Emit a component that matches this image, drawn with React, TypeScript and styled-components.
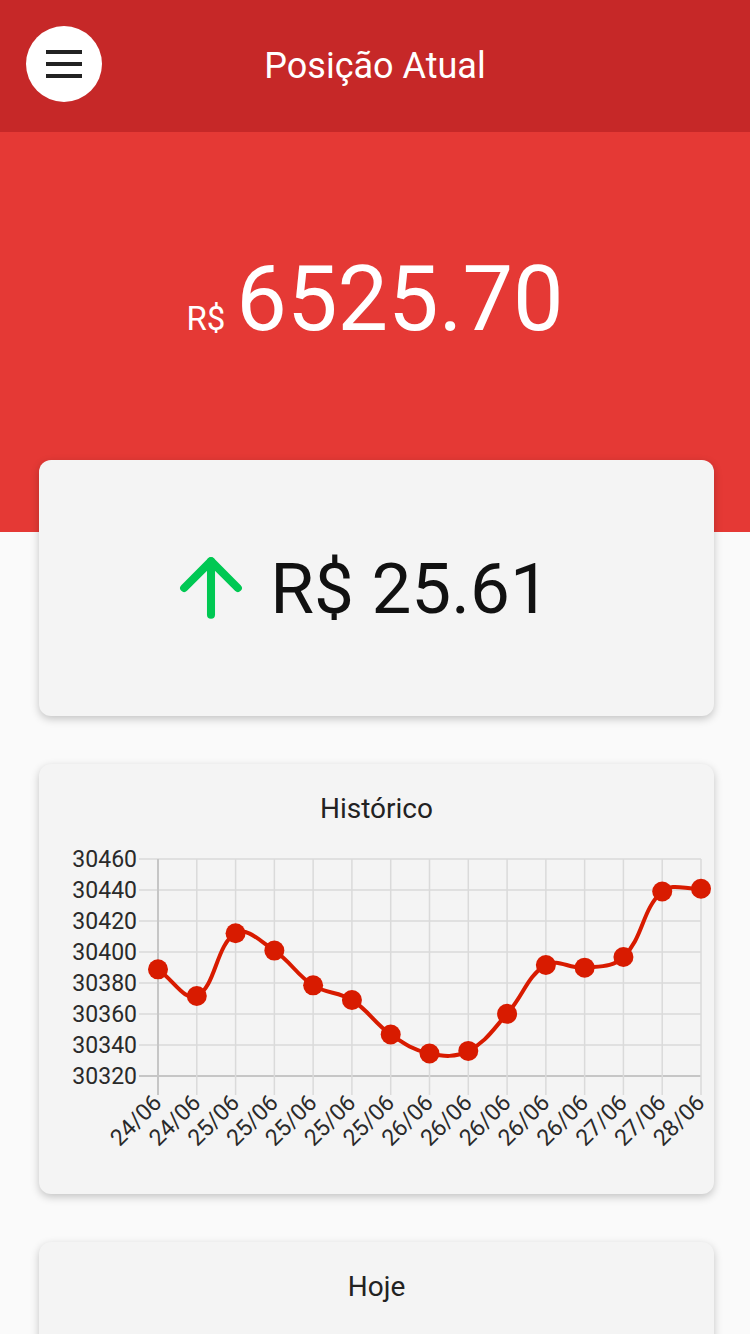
import { ReactElement } from 'react';
import styled, { createGlobalStyle } from 'styled-components';
import { ArrowUp } from 'lucide-react';

const GlobalStyle = createGlobalStyle`
  html, body {
    margin: 0;
    padding: 0;
    background: #fafafa;
    font-family: Roboto, "Liberation Sans", Arial, sans-serif;
  }
`;

const Page = styled.div`
  min-height: 1334px;
  background: #fafafa;
  overflow: hidden;
`;

const Header = styled.header`
  display: grid;
  grid-template-columns: 1fr auto 1fr;
  align-items: center;
  height: 132px;
  padding: 0 26px;
  box-sizing: border-box;
  background: #c62828;
`;

const MenuButton = styled.button`
  display: flex;
  flex-direction: column;
  align-items: center;
  justify-content: center;
  gap: 8px;
  align-self: start;
  margin-top: 26px;
  width: 76px;
  height: 76px;
  padding: 0;
  border: none;
  border-radius: 50%;
  background: #ffffff;
  cursor: pointer;
`;

const MenuLine = styled.span`
  display: block;
  width: 36px;
  height: 4px;
  background: #222222;
`;

const HeaderTitle = styled.h1`
  margin: 0;
  font-size: 36px;
  font-weight: 400;
  color: #ffffff;
  white-space: nowrap;
`;

const Hero = styled.section`
  display: flex;
  justify-content: center;
  align-items: baseline;
  height: 400px;
  padding-top: 123px;
  box-sizing: border-box;
  background: #e53935;
  color: #ffffff;
`;

const Currency = styled.span`
  font-size: 33px;
  margin-right: 11px;
`;

const Balance = styled.span`
  font-size: 90px;
  line-height: 1;
`;

const Cards = styled.main`
  position: relative;
  display: flex;
  flex-direction: column;
  gap: 48px;
  margin-top: -72px;
  padding: 0 36px 40px 39px;
`;

const Card = styled.div<{ $minHeight?: number }>`
  background: #f4f4f4;
  border-radius: 12px;
  box-shadow: 0 3px 9px rgba(0, 0, 0, 0.22);
  min-height: ${(p) => (p.$minHeight ? `${p.$minHeight}px` : 'auto')};
  box-sizing: border-box;
`;

const ChangeCard = styled(Card)`
  display: flex;
  align-items: center;
  justify-content: center;
  gap: 13px;
  height: 256px;
  padding-right: 38px;
`;

const ChangeValue = styled.span`
  font-size: 71px;
  color: #111111;
  line-height: 1;
`;

const ChartCard = styled(Card)`
  padding: 28px 0 28px;
`;

const CardTitle = styled.h2`
  margin: 0;
  text-align: center;
  font-size: 28px;
  line-height: 34px;
  font-weight: 400;
  color: #222222;
`;

const ChartSvg = styled.svg`
  display: block;
  width: 675px;
  height: 340px;
`;

const history = [
  { label: '24/06', value: 30388.8 },
  { label: '24/06', value: 30371.6 },
  { label: '25/06', value: 30412.1 },
  { label: '25/06', value: 30400.9 },
  { label: '25/06', value: 30378.5 },
  { label: '25/06', value: 30369 },
  { label: '25/06', value: 30346.8 },
  { label: '26/06', value: 30334.5 },
  { label: '26/06', value: 30336.2 },
  { label: '26/06', value: 30360.1 },
  { label: '26/06', value: 30391.6 },
  { label: '26/06', value: 30389.9 },
  { label: '27/06', value: 30396.8 },
  { label: '27/06', value: 30439 },
  { label: '28/06', value: 30440.8 },
];

const yTicks = [30460, 30440, 30420, 30400, 30380, 30360, 30340, 30320];

// plot area inside the svg
const left = 119;
const right = 662;
const top = 33;
const bottom = 250;
const yMax = 30460;
const yMin = 30320;

const xAt = (i: number) => left + ((right - left) * i) / (history.length - 1);
const yAt = (v: number) => top + ((yMax - v) / (yMax - yMin)) * (bottom - top);

// same spline as chart.js (tension 0.4)
function splinePath(pts: { x: number; y: number }[], tension = 0.4): string {
  const cps = pts.map((p, i) => {
    const prev = pts[i - 1] || p;
    const next = pts[i + 1] || p;
    const d01 = Math.hypot(p.x - prev.x, p.y - prev.y);
    const d12 = Math.hypot(next.x - p.x, next.y - p.y);
    const total = d01 + d12 || 1;
    const fa = (tension * d01) / total;
    const fb = (tension * d12) / total;
    return {
      prev: { x: p.x - fa * (next.x - prev.x), y: p.y - fa * (next.y - prev.y) },
      next: { x: p.x + fb * (next.x - prev.x), y: p.y + fb * (next.y - prev.y) },
    };
  });
  let d = `M ${pts[0].x} ${pts[0].y}`;
  for (let i = 1; i < pts.length; i++) {
    const a = cps[i - 1].next;
    const b = cps[i].prev;
    d += ` C ${a.x} ${a.y} ${b.x} ${b.y} ${pts[i].x} ${pts[i].y}`;
  }
  return d;
}

function HistoryChart(): ReactElement {
  const points = history.map((h, i) => ({ x: xAt(i), y: yAt(h.value) }));
  return (
    <ChartSvg viewBox="0 0 675 340">
      {yTicks.map((t) => (
        <g key={t}>
          <line
            x1={100}
            x2={right}
            y1={yAt(t)}
            y2={yAt(t)}
            stroke={t === yMin ? '#c6c6c6' : '#dadada'}
            strokeWidth={t === yMin ? 2 : 1.5}
          />
          <text
            x={98}
            y={yAt(t)}
            textAnchor="end"
            dominantBaseline="central"
            fontSize={23}
            fill="#2a2a2a"
            fontFamily="Roboto, sans-serif"
          >
            {t}
          </text>
        </g>
      ))}
      {history.map((h, i) => {
        const x = xAt(i);
        const ly = 278;
        return (
          <g key={i}>
            <line
              x1={x}
              x2={x}
              y1={top}
              y2={269}
              stroke={i === 0 ? '#c6c6c6' : '#dadada'}
              strokeWidth={i === 0 ? 2 : 1.5}
            />
            <text
              x={x + 5}
              y={ly}
              transform={`rotate(-45 ${x + 5} ${ly})`}
              textAnchor="end"
              fontSize={23}
              fill="#2a2a2a"
              fontFamily="Roboto, sans-serif"
            >
              {h.label}
            </text>
          </g>
        );
      })}
      <path d={splinePath(points)} fill="none" stroke="#d81b00" strokeWidth={4} />
      {points.map((p, i) => (
        <circle key={i} cx={p.x} cy={p.y} r={10} fill="#d81b00" />
      ))}
    </ChartSvg>
  );
}

export default function App(): ReactElement {
  return (
    <Page>
      <GlobalStyle />
      <Header>
        <MenuButton aria-label="menu">
          <MenuLine />
          <MenuLine />
          <MenuLine />
        </MenuButton>
        <HeaderTitle>Posição Atual</HeaderTitle>
        <span />
      </Header>
      <Hero>
        <Currency>R$</Currency>
        <Balance>6525.70</Balance>
      </Hero>
      <Cards>
        <ChangeCard>
          <ArrowUp size={92} strokeWidth={2.1} color="#00c853" />
          <ChangeValue>R$ 25.61</ChangeValue>
        </ChangeCard>
        <ChartCard>
          <CardTitle>Histórico</CardTitle>
          <HistoryChart />
        </ChartCard>
        <ChartCard $minHeight={300}>
          <CardTitle>Hoje</CardTitle>
        </ChartCard>
      </Cards>
    </Page>
  );
}
